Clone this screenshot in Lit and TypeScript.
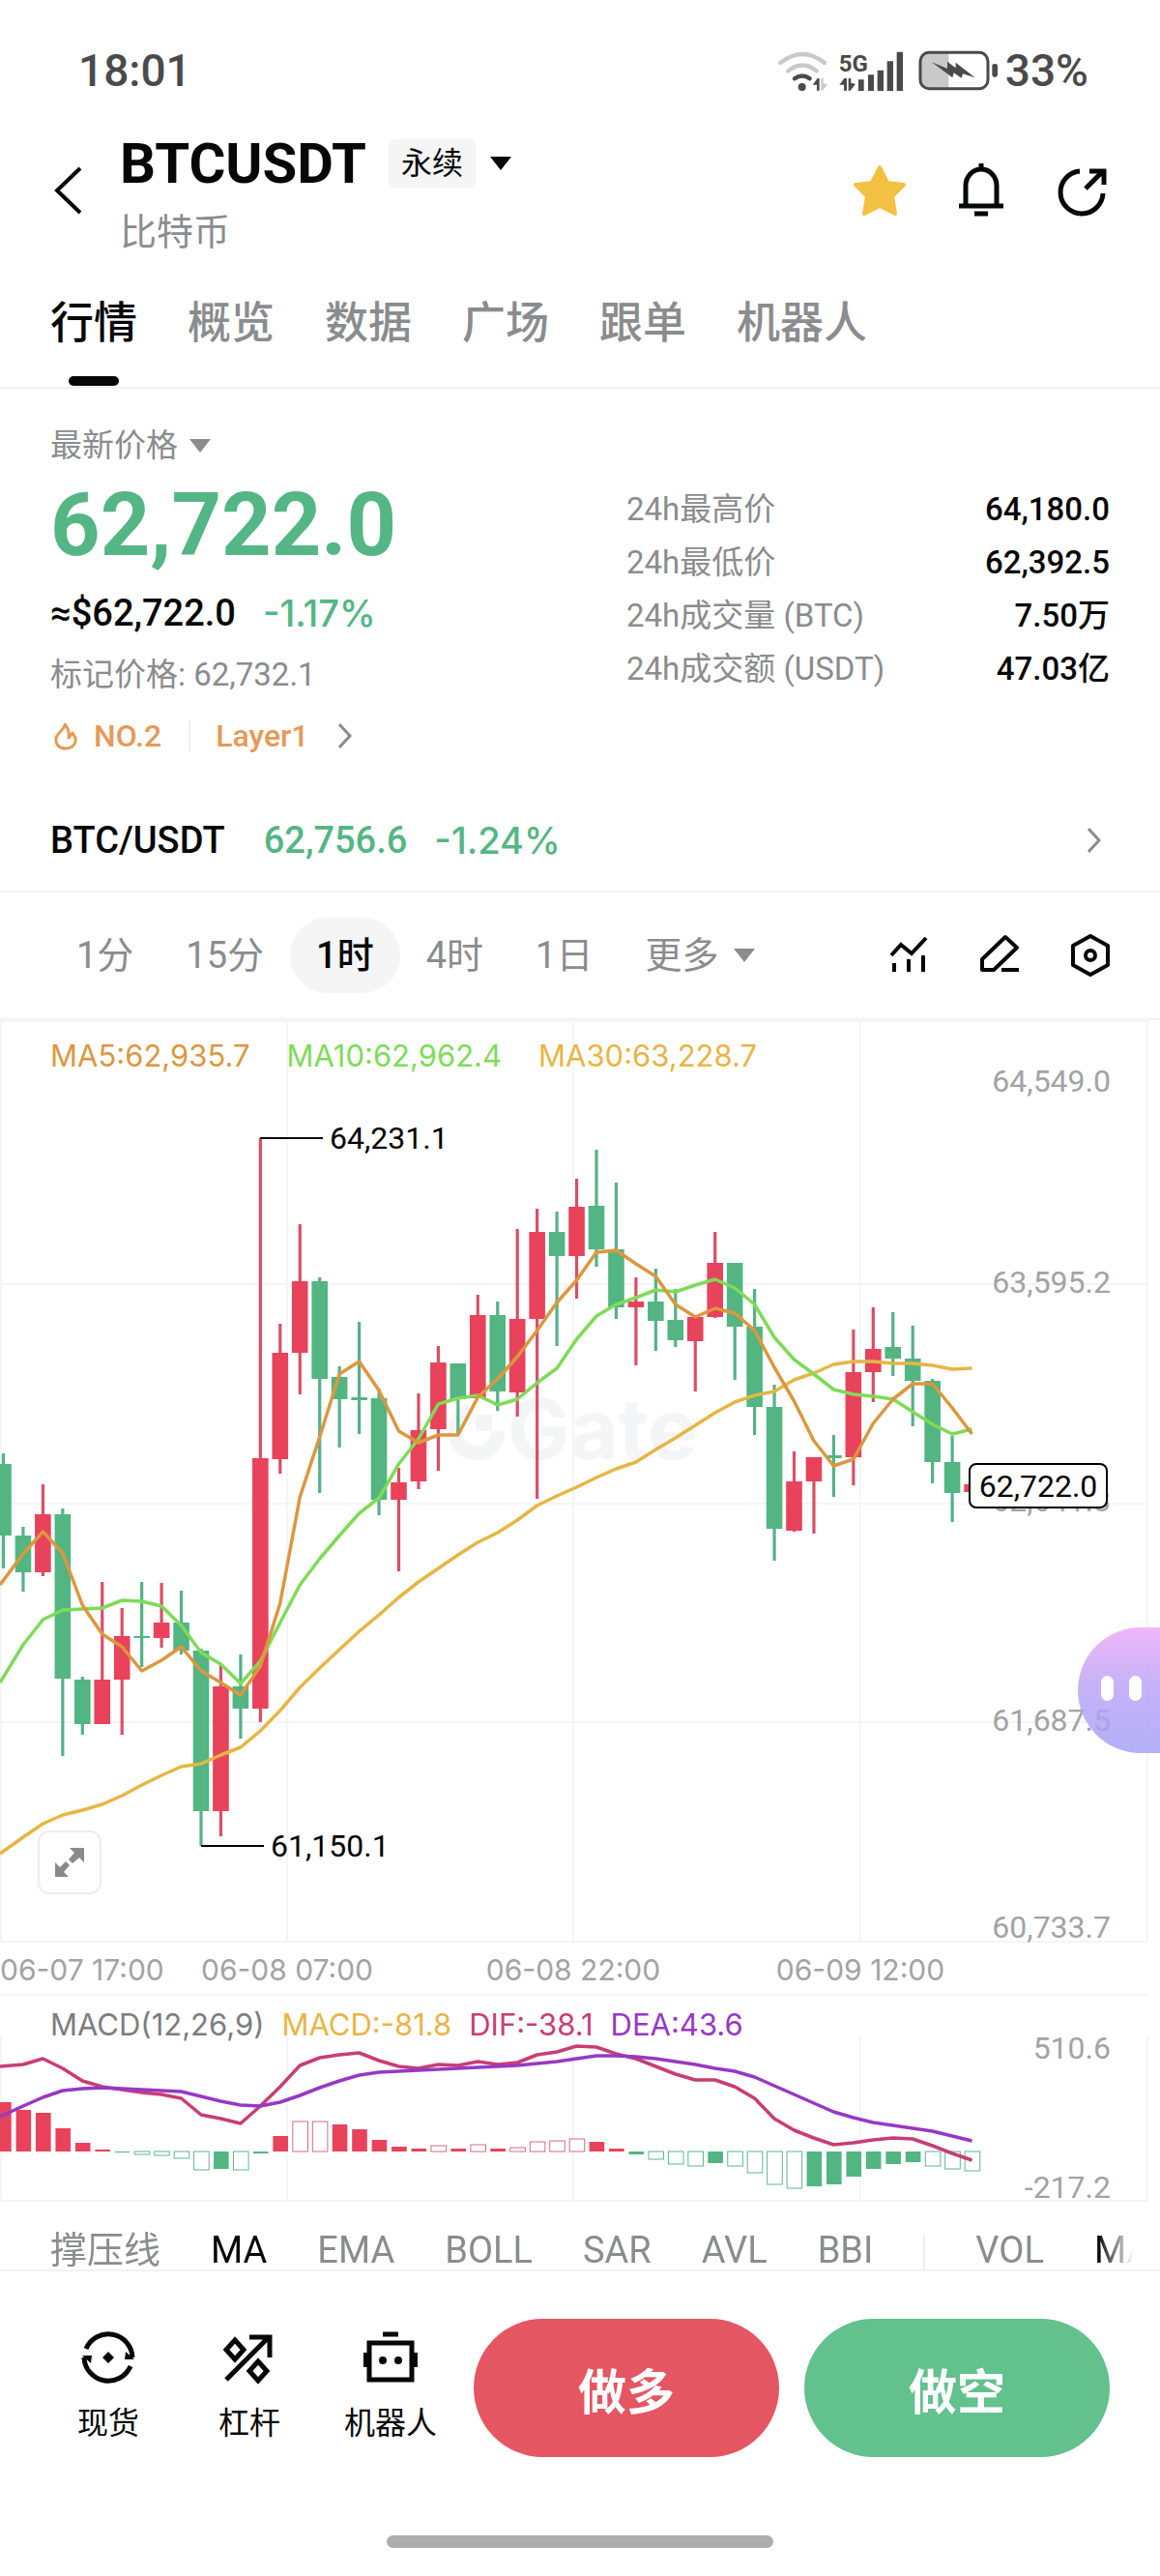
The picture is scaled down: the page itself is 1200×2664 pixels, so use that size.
import { LitElement, html, svg, css } from "lit";
import { customElement, property, state } from "lit/decorators.js";
import { classMap } from "lit/directives/class-map.js";

type Side = "up" | "down";
/** side, body top, body bottom, wick top, wick bottom (chart units) */
type Candle = [Side, number, number, number, number];
/** side, height of the histogram bar, filled or outlined */
type Bar = [Side, number, boolean];

const STEP = 20.45;
const FIRST = 3.5;
const xAt = (i: number) => FIRST + STEP * i;

const CANDLES: Candle[] = [
  ["down", 1514, 1588, 1503, 1622], ["down", 1588, 1626, 1579, 1646], ["up", 1566, 1626, 1535, 1630],
  ["down", 1566, 1736, 1560, 1816], ["down", 1737, 1783, 1734, 1794], ["up", 1737, 1783, 1636, 1783],
  ["up", 1692, 1737, 1663, 1794], ["down", 1692, 1694, 1636, 1724], ["up", 1678, 1694, 1637, 1704],
  ["down", 1678, 1707, 1645, 1711], ["down", 1707, 1873, 1705, 1909], ["up", 1744, 1873, 1722, 1899],
  ["down", 1744, 1767, 1711, 1798], ["up", 1508, 1767, 1177, 1781], ["up", 1399, 1509, 1369, 1524],
  ["up", 1325, 1399, 1266, 1442], ["down", 1325, 1426, 1321, 1544], ["down", 1424, 1447, 1413, 1497],
  ["down", 1445, 1448, 1367, 1483], ["down", 1446, 1551, 1436, 1567], ["up", 1533, 1551, 1518, 1625],
  ["up", 1479, 1532, 1441, 1540], ["up", 1409, 1478, 1392, 1521], ["down", 1410, 1447, 1410, 1483],
  ["up", 1360, 1446, 1339, 1446], ["down", 1360, 1439, 1346, 1459], ["up", 1364, 1440, 1271, 1465],
  ["up", 1274, 1364, 1250, 1550], ["down", 1274, 1299, 1253, 1392], ["up", 1248, 1299, 1219, 1343],
  ["down", 1247, 1292, 1189, 1310], ["down", 1292, 1352, 1223, 1364], ["up", 1346, 1352, 1321, 1412],
  ["down", 1346, 1366, 1312, 1397], ["down", 1365, 1386, 1333, 1393], ["up", 1362, 1387, 1362, 1439],
  ["up", 1306, 1362, 1274, 1363], ["down", 1306, 1372, 1306, 1427], ["down", 1372, 1455, 1333, 1484],
  ["down", 1455, 1581, 1432, 1614], ["up", 1532, 1583, 1501, 1584], ["up", 1507, 1532, 1507, 1586],
  ["down", 1505, 1508, 1484, 1548], ["up", 1419, 1507, 1375, 1536], ["up", 1395, 1419, 1352, 1450],
  ["down", 1393, 1405, 1357, 1423], ["down", 1405, 1428, 1371, 1475], ["down", 1428, 1512, 1426, 1534],
  ["down", 1512, 1544, 1485, 1574], ["up", 1535, 1543, 1535, 1543],
];

const MA5 = [1639, 1607, 1584, 1606, 1660, 1690, 1703, 1728, 1717, 1703, 1728, 1740, 1753, 1723, 1658, 1548, 1486,
  1421, 1408, 1438, 1480, 1492, 1484, 1484, 1445, 1426, 1403, 1376, 1347, 1324, 1295, 1293, 1307, 1320, 1349, 1362,
  1353, 1358, 1376, 1414, 1449, 1490, 1516, 1509, 1472, 1447, 1431, 1431, 1456, 1483];
const MA10 = [1740, 1701, 1675, 1665, 1664, 1663, 1655, 1656, 1661, 1681, 1709, 1721, 1741, 1718, 1678, 1639, 1612,
  1588, 1565, 1549, 1514, 1488, 1452, 1446, 1443, 1453, 1447, 1430, 1415, 1385, 1361, 1349, 1342, 1334, 1336, 1329,
  1323, 1332, 1349, 1383, 1406, 1421, 1437, 1442, 1444, 1447, 1460, 1473, 1483, 1478];
const MA30 = [1917, 1900, 1886, 1877, 1872, 1866, 1857, 1846, 1836, 1827, 1824, 1815, 1807, 1790, 1769, 1745, 1725,
  1706, 1687, 1670, 1652, 1636, 1622, 1608, 1595, 1585, 1572, 1557, 1547, 1538, 1528, 1519, 1512, 1499, 1487, 1474,
  1461, 1450, 1443, 1439, 1427, 1420, 1411, 1408, 1408, 1410, 1410, 1412, 1416, 1415];
const DIF = [2137, 2135, 2129, 2139, 2152, 2158, 2161, 2164, 2166, 2170, 2187, 2191, 2196, 2178, 2158, 2136, 2128,
  2125, 2123, 2131, 2137, 2139, 2135, 2136, 2132, 2135, 2133, 2125, 2122, 2116, 2117, 2124, 2129, 2137, 2145, 2151,
  2151, 2158, 2170, 2191, 2203, 2211, 2218, 2216, 2213, 2211, 2212, 2219, 2227, 2234];
const DEA = [2189, 2178, 2169, 2162, 2160, 2159, 2160, 2161, 2162, 2163, 2168, 2173, 2177, 2178, 2174, 2167, 2159,
  2152, 2146, 2143, 2142, 2141, 2140, 2139, 2138, 2137, 2136, 2134, 2132, 2129, 2126, 2126, 2127, 2129, 2132, 2135,
  2139, 2142, 2148, 2157, 2166, 2175, 2184, 2190, 2195, 2198, 2201, 2204, 2209, 2214];

const HISTOGRAM: Bar[] = [
  ["up", 51, true], ["up", 43, true], ["up", 40, true], ["up", 24, true], ["up", 9, true], ["up", 2, true],
  ["down", 1, true], ["down", 3, false], ["down", 4, false], ["down", 7, false], ["down", 19, false],
  ["down", 18, true], ["down", 19, false], ["down", 2, true], ["up", 16, true], ["up", 31, false],
  ["up", 31, false], ["up", 28, true], ["up", 23, true], ["up", 12, true], ["up", 5, true], ["up", 3, true],
  ["up", 6, false], ["up", 3, true], ["up", 7, false], ["up", 3, true], ["up", 4, false], ["up", 10, false],
  ["up", 11, false], ["up", 13, false], ["up", 10, true], ["up", 3, true], ["down", 3, true],
  ["down", 8, false], ["down", 13, false], ["down", 15, false], ["down", 12, true], ["down", 15, false],
  ["down", 22, false], ["down", 34, false], ["down", 38, false], ["down", 36, true], ["down", 34, true],
  ["down", 26, true], ["down", 18, true], ["down", 13, true], ["down", 11, true], ["down", 15, false],
  ["down", 18, false], ["down", 20, false],
];

const line = (ys: number[]) =>
  ys.map((y, i) => `${i === 0 ? 0 : xAt(i).toFixed(1)},${y}`).join(" ");

@customElement("price-chart")
export class PriceChart extends LitElement {
  static styles = css`
    :host { display: block; position: relative; }
    .plot { display: block; width: 100%; height: auto; }
    .grid { stroke: #f4f5f6; stroke-width: 2; fill: none; }
    .mark { fill: #f4f5f7; }
    .ring { stroke: #f4f5f7; stroke-width: 15; fill: none; }
    .brand { font: 700 86px Inter, sans-serif; fill: #f4f5f7; }
    .up { fill: #e9425b; }
    .down { fill: #52b582; }
    .wick-up { fill: #d94f66; }
    .wick-down { fill: #55b188; }
    .axis { font: 400 32px Roboto, sans-serif; fill: #a1a3a5; }
    .date { font: 400 30px Inter, sans-serif; fill: #a1a3a5; }
    .end { text-anchor: end; }
    .mid { text-anchor: middle; }
    .curve { fill: none; stroke-width: 3.5; stroke-linejoin: round; }
    .ma5 { stroke: #dc973f; }
    .ma10 { stroke: #7edb58; }
    .ma30 { stroke: #e6b644; }
    .lead { stroke: #000; stroke-width: 2; }
    .note { font: 400 32px Roboto, sans-serif; fill: #000; }
    .tag { fill: #fff; stroke: #000; stroke-width: 2; }
    .legend {
      position: absolute; top: 18px; left: 52px; display: flex; gap: 38px;
      font: 400 31px/38px Inter, sans-serif;
    }
    .t5 { color: #dc973f; }
    .t10 { color: #7edb58; }
    .t30 { color: #e6b644; }
    .expand {
      position: absolute; left: 39px; bottom: 103px; width: 66px; height: 66px; padding: 0;
      display: grid; place-items: center; background: #fff; border: 2px solid #ededee; border-radius: 12px;
    }
    .helper {
      position: absolute; right: 0; top: 628px; width: 85px; height: 130px; border: 0;
      border-radius: 65px 0 0 65px; display: flex; align-items: center; gap: 16px; padding: 0 0 4px 24px;
      background: linear-gradient(rgba(238, 177, 248, 0.92), rgba(190, 168, 247, 0.88) 45%, rgba(160, 157, 246, 0.8));
    }
    .eye { width: 13px; height: 26px; border-radius: 7px; background: #fff; }
  `;

  render() {
    const labels: [string, number][] = [
      ["64,549.0", 1129], ["63,595.2", 1337], ["62,641.3", 1563], ["61,687.5", 1790], ["60,733.7", 2004],
    ];
    const dates: [string, number][] = [["06-08 07:00", 297], ["06-08 22:00", 593], ["06-09 12:00", 890]];
    return html`
      <svg class="plot" viewBox="0 1055 1200 1007" role="img" aria-label="BTCUSDT 1时 K线">
        <path class="grid" d="M0 1056H1187M0 1328H1187M0 1555H1187M0 1781H1187M0 2008H1187
          M1 1055V2008M297 1055V2008M593 1055V2008M890 1055V2008M1187 1055V2008" />
        <path class="ring" d="M490 1459A22 22 0 1 0 515 1480" />
        <rect class="mark" x="492" y="1463" width="17" height="17" />
        <text class="brand" x="525" y="1509">Gate</text>
        ${CANDLES.map(([side, top, bottom, high, low], i) => svg`
          <rect class="wick-${side}" x=${xAt(i) - 1.6} y=${high} width="3.2" height=${low - high} />
          <rect class=${side} x=${xAt(i) - 8.3} y=${top} width="16.6" height=${bottom - top} />`)}
        <polyline class="curve ma30" points=${line(MA30)} />
        <polyline class="curve ma10" points=${line(MA10)} />
        <polyline class="curve ma5" points=${line(MA5)} />
        <path class="lead" d="M269 1177H334M208 1909H273" />
        <text class="note" x="341" y="1188">64,231.1</text>
        <text class="note" x="280" y="1920">61,150.1</text>
        ${labels.map(([t, y]) => svg`<text class="axis end" x="1149" y=${y}>${t}</text>`)}
        <rect class="tag" x="1003" y="1514" width="142" height="45" rx="7" />
        <text class="note mid" x="1074" y="1548">62,722.0</text>
        <text class="date" x="0" y="2048">06-07 17:00</text>
        ${dates.map(([t, x]) => svg`<text class="date mid" x=${x} y="2048">${t}</text>`)}
      </svg>
      <div class="legend">
        <span class="t5">MA5:62,935.7</span><span class="t10">MA10:62,962.4</span><span class="t30">MA30:63,228.7</span>
      </div>
      <button class="expand" aria-label="全屏">
        <svg width="32" height="32" viewBox="0 0 32 32" fill="#8a8a8a">
          <path d="M16 1h15v15l-5-5-7 6-4-4 6-7zM1 31V16l5 5 6-6 4 4-6 7 5 5z" />
        </svg>
      </button>
      <button class="helper" aria-label="助手"><span class="eye"></span><span class="eye"></span></button>
    `;
  }
}

@customElement("macd-chart")
export class MacdChart extends LitElement {
  static styles = css`
    :host { display: block; position: relative; }
    .plot { display: block; width: 100%; height: auto; }
    .grid { stroke: #f4f5f6; stroke-width: 2; fill: none; }
    .axis { font: 400 32px Roboto, sans-serif; fill: #a1a3a5; text-anchor: end; }
    .curve { fill: none; stroke-width: 3.5; stroke-linejoin: round; }
    .dif { stroke: #c83d76; }
    .dea { stroke: #9738c4; }
    .up { fill: #e9425b; }
    .down { fill: #52b582; }
    .box-up { fill: #fff; stroke: #d76b7e; }
    .box-down { fill: #fff; stroke: #5cb88c; }
    .legend {
      position: absolute; top: 13px; left: 52px; display: flex; gap: 18px;
      font: 400 31px/38px Inter, sans-serif; color: #7b7d7f;
    }
    .t-macd { color: #e9b545; }
    .t-dif { color: #c83d76; }
    .t-dea { color: #9738c4; }
  `;

  render() {
    const zero = 2225;
    return html`
      <svg class="plot" viewBox="0 2062 1200 215" role="img" aria-label="MACD">
        <path class="grid" d="M0 2063H1187M0 2276H1187M1 2105V2276M297 2105V2276M593 2105V2276M890 2105V2276M1187 2105V2276" />
        ${HISTOGRAM.map(([side, h, filled], i) => {
          const y = side === "up" ? zero - h : zero;
          return filled
            ? svg`<rect class=${side} x=${xAt(i) - 7.4} y=${y} width="15.6" height=${h} />`
            : svg`<rect class="box-${side}" x=${xAt(i) - 7.4} y=${y} width="15.6" height=${h} />`;
        })}
        <polyline class="curve dif" points=${line(DIF)} />
        <polyline class="curve dea" points=${line(DEA)} />
        <text class="axis" x="1149" y="2129">510.6</text>
        <text class="axis" x="1149" y="2273">-217.2</text>
      </svg>
      <div class="legend">
        <span>MACD(12,26,9)</span><span class="t-macd">MACD:-81.8</span><span class="t-dif">DIF:-38.1</span>
        <span class="t-dea">DEA:43.6</span>
      </div>
    `;
  }
}

@customElement("status-bar")
export class StatusBar extends LitElement {
  static styles = css`
    :host {
      box-sizing: border-box; display: flex; align-items: center; justify-content: space-between; height: 134px;
      padding: 12px 74px 0 81px; font: 500 46px/54px Roboto, sans-serif; color: #4a4a4a;
    }
    .right { display: flex; align-items: center; gap: 6px; }
    .net { font: 700 72px Roboto, sans-serif; }
  `;

  render() {
    return html`
      <span>18:01</span>
      <span class="right">
        <svg width="230" height="48" viewBox="50 26 690 144" fill="#4a4a4a" role="img" aria-label="5G">
          <g fill="none" stroke-width="13" stroke-linecap="round">
            <path stroke="#c9c9c9" d="M60 74Q128 20 197 74M84 99Q128 64 172 99" />
            <path stroke="#4a4a4a" d="M104 123Q128 106 151 123" />
          </g>
          <circle cx="127" cy="149" r="12" />
          <path d="M160 142L175 122H181V160H173V142z" />
          <path fill="#c9c9c9" d="M186 122H193V138L207 140L190 160H186z" />
          <text class="net" x="241" y="101">5G</text>
          <path d="M243 142L258 122H266V160H257V142zM271 122H279V136L293 140L277 160H271z" />
          <path d="M302 126h17v35h-17zM332 111h18v50h-18zM361 97h19v64h-19zM391 69h19v92h-19zM421 40h19v121h-19z" />
          <path fill="#c9c9c9" d="M520 42H582V154H520Q494 154 494 128V68Q494 42 520 42z" />
          <rect x="494" y="42" width="210" height="112" rx="27" fill="none" stroke="#4a4a4a" stroke-width="9" />
          <rect x="717" y="77" width="17" height="41" rx="7" />
          <path d="M530 72L578 92V70L604 90V73L664 120L626 108L622 121L598 105L594 120L570 102z" />
        </svg>
        <span>33%</span>
      </span>
    `;
  }
}

@customElement("app-root")
export class AppRoot extends LitElement {
  @state() private tab = "行情";
  @state() private interval = "1时";
  @property({ type: String }) symbol = "BTCUSDT";

  static styles = css`
    :host {
      display: block; background: #fff; color: #060707; overflow: hidden;
      font-family: Roboto, "Noto Sans CJK SC", sans-serif;
    }
    * { box-sizing: border-box; }
    button { border: 0; background: none; padding: 0; margin: 0; font: inherit; color: inherit; }
    a { color: inherit; text-decoration: none; }
    svg { display: block; flex: none; }
    h1, p, dl, dd, dt { margin: 0; font-weight: inherit; }
    .grey { color: #8a8c8e; }
    .green { color: #54b684; }
    .rate { font-family: Inter, sans-serif; }

    .head { display: flex; align-items: center; height: 126px; padding: 0 52px; }
    .back { margin-right: 38px; }
    .names { flex: 1; display: flex; flex-direction: column; gap: 16px; }
    .pair { display: flex; align-items: center; gap: 23px; height: 70px; }
    .pair h1 { font: 700 58px/70px Roboto, sans-serif; }
    .kind { display: flex; align-items: center; gap: 15px; font-size: 32px; line-height: 51px; }
    .chip { background: #f5f5f5; border-radius: 6px; padding: 0 13px; }
    .coin { font-size: 38px; line-height: 40px; }
    .tools { display: flex; gap: 49px; }

    .tabs { display: flex; gap: 52px; padding: 0 52px; border-bottom: 2px solid #f2f2f3; }
    .tab { position: relative; padding: 45px 0 35px; font-size: 45px; line-height: 60px; font-weight: 500; color: #8a8c8e; }
    .tab.on { color: #060707; }
    .tab.on::after {
      content: ""; position: absolute; left: 50%; bottom: 1px; width: 52px; height: 10px; margin-left: -26px;
      border-radius: 5px; background: #060707;
    }

    .quote { display: grid; grid-template-columns: 596fr 500fr; padding: 39px 52px 0; font-size: 33px; line-height: 40px; }
    .latest { display: flex; align-items: center; gap: 12px; }
    .price { font-size: 90px; line-height: 100px; font-weight: 700; margin: 13px 0 18px; }
    .fiat { display: flex; gap: 28px; font-size: 38px; line-height: 44px; font-weight: 500; margin-bottom: 22px; }
    .rank { display: flex; align-items: center; margin-top: 23px; color: #e59a58; font-weight: 500; font-size: 32px; }
    .rank .no { padding: 0 28px 0 13px; }
    .rank .layer { border-left: 2px solid #f0f0f1; padding: 0 30px 0 26px; line-height: 32px; }
    .stats { padding-top: 58px; line-height: 55px; }
    .stats div { display: flex; justify-content: space-between; }
    .stats dd { font-weight: 500; }
    .stats dt { color: #8a8c8e; }

    .spot {
      display: flex; align-items: center; gap: 40px; height: 142px; padding: 36px 61px 0 52px;
      border-bottom: 2px solid #f2f2f3; font-size: 38px; line-height: 44px; font-weight: 500;
    }
    .spot .nums { flex: 1; display: flex; gap: 28px; }

    .periods { display: flex; align-items: center; height: 132px; padding: 0 52px; border-bottom: 2px solid #f2f2f3; }
    .period { height: 78px; padding: 0 27px; border-radius: 39px; font-size: 38px; line-height: 78px; color: #8a8c8e; }
    .period.on { background: #f5f5f5; color: #060707; font-weight: 500; }
    .more { display: flex; align-items: center; gap: 16px; }
    .draw { margin-left: auto; display: flex; gap: 54px; }

    .marks {
      display: flex; align-items: flex-end; gap: 52px; padding: 30px 0 12px 52px; margin: 0 28px -12px 0; overflow: hidden;
      font-size: 38px; line-height: 40px; color: #8a8c8e;
      -webkit-mask-image: linear-gradient(to left, transparent, #000 36px);
      mask-image: linear-gradient(to left, transparent, #000 36px);
    }
    .marks button { flex: none; }
    .marks .on { color: #060707; }
    .bar { width: 2px; height: 36px; flex: none; background: #eeeeef; }

    .trade { display: flex; padding: 49px 52px 81px 39px; border-top: 2px solid #f2f2f3; }
    .nav { flex: 438; display: grid; grid-template-columns: repeat(3, 1fr); margin-right: 13px; }
    .nav a { display: flex; flex-direction: column; align-items: center; gap: 20px; padding-top: 12px; font-size: 32px; line-height: 40px; white-space: nowrap; }
    .act { flex: 658; display: grid; grid-template-columns: 1fr 1fr; gap: 26px; }
    .act button { height: 143px; border-radius: 72px; font-size: 50px; font-weight: 700; color: #fff; }
    .long { background: #e45661; }
    .short { background: #62c18d; }
    .home { width: 400px; height: 13px; margin: 0 auto 30px; border-radius: 7px; background: #adadad; }
  `;

  private caret(color: string) {
    return html`<svg width="22" height="14" viewBox="0 0 22 14"><path d="M0 0H22L11 14z" fill=${color} /></svg>`;
  }

  private chevron() {
    return html`<svg width="14" height="26" viewBox="0 0 14 26" fill="none" stroke="#8a8c8e" stroke-width="3"><path d="M1 1L12 13L1 25" /></svg>`;
  }

  render() {
    const tabs = ["行情", "概览", "数据", "广场", "跟单", "机器人"];
    const periods = ["1分", "15分", "1时", "4时", "1日"];
    const stats = [
      ["24h最高价", "64,180.0"], ["24h最低价", "62,392.5"], ["24h成交量 (BTC)", "7.50万"], ["24h成交额 (USDT)", "47.03亿"],
    ];
    return html`
      <status-bar></status-bar>
      <header class="head">
        <button class="back" aria-label="返回">
          <svg width="34" height="52" viewBox="0 0 34 52" fill="none" stroke="#060707" stroke-width="4"><path d="M31 3L7 26L31 49" /></svg>
        </button>
        <div class="names">
          <div class="pair">
            <h1>${this.symbol}</h1>
            <button class="kind"><span class="chip">永续</span>${this.caret("#060707")}</button>
          </div>
          <p class="coin grey">比特币</p>
        </div>
        <div class="tools">
          <button aria-label="收藏">
            <svg width="56" height="56" viewBox="0 0 56 56"><path fill="#f3c142" stroke="#f3c142" stroke-width="4" stroke-linejoin="round"
              d="M28 4L36 20L53 22L41 34L44 52L28 44L12 52L15 34L3 22L20 20z" /></svg>
          </button>
          <button aria-label="提醒">
            <svg width="56" height="56" viewBox="0 0 56 56" fill="none" stroke="#060707" stroke-width="5">
              <path d="M28 0V6M12 44V23A16 17 0 0 1 44 23V44M5 44H51M21 52H35" /></svg>
          </button>
          <button aria-label="分享">
            <svg width="56" height="56" viewBox="0 0 56 56" fill="none" stroke="#060707" stroke-width="5">
              <path d="M25 8A22 22 0 1 0 49 31M31 26L48 9M35 8H50V22" /></svg>
          </button>
        </div>
      </header>

      <nav class="tabs">
        ${tabs.map((t) => html`<button class=${classMap({ tab: true, on: t === this.tab })} @click=${() => (this.tab = t)}>${t}</button>`)}
      </nav>

      <section class="quote">
        <div>
          <button class="latest grey">最新价格 ${this.caret("#8a8c8e")}</button>
          <p class="price green">62,722.0</p>
          <p class="fiat"><span>≈$62,722.0</span><span class="green rate">-1.17%</span></p>
          <p class="grey">标记价格: 62,732.1</p>
          <a class="rank" href="#rank">
            <svg width="32" height="32" viewBox="0 0 32 32" fill="none" stroke="#e59a58" stroke-width="3" stroke-linejoin="round">
              <path d="M15 4C16 8 8 12 6 18C5 25 9 29 16 29C23 29 27 24 26 18L23 13L19 18C20 11 18 7 15 4z" /></svg>
            <span class="no">NO.2</span><span class="layer">Layer1</span>${this.chevron()}
          </a>
        </div>
        <dl class="stats">
          ${stats.map(([k, v]) => html`<div><dt>${k}</dt><dd>${v}</dd></div>`)}
        </dl>
      </section>

      <a class="spot" href="#spot">
        <span>BTC/USDT</span>
        <span class="nums green"><span>62,756.6</span><span class="rate">-1.24%</span></span>
        ${this.chevron()}
      </a>

      <div class="periods">
        ${periods.map((p) => html`<button class=${classMap({ period: true, on: p === this.interval })} @click=${() => (this.interval = p)}>${p}</button>`)}
        <button class="period more">更多 ${this.caret("#8a8c8e")}</button>
        <div class="draw">
          <button aria-label="指标">
            <svg width="40" height="44" viewBox="0 0 40 44" fill="none" stroke="#060707" stroke-width="4">
              <path d="M2 22L12 11L23 20L38 4M5 30V39M20 26V39M35 22V39" /></svg>
          </button>
          <button aria-label="画线">
            <svg width="40" height="44" viewBox="0 0 40 44" fill="none" stroke="#060707" stroke-width="4" stroke-linejoin="round">
              <path d="M2 26L26 3L38 14L14 37H2zM22 37H40" /></svg>
          </button>
          <button aria-label="设置">
            <svg width="40" height="44" viewBox="0 0 40 44" fill="none" stroke="#060707" stroke-width="4" stroke-linejoin="round">
              <path d="M20 2L38 12V32L20 42L2 32V12z" /><circle cx="20" cy="22" r="5" /></svg>
          </button>
        </div>
      </div>

      <price-chart></price-chart>
      <macd-chart></macd-chart>

      <div class="marks">
        <button>撑压线</button><button class="on">MA</button><button>EMA</button><button>BOLL</button><button>SAR</button>
        <button>AVL</button><button>BBI</button><span class="bar"></span><button>VOL</button><button class="on">MACD</button>
      </div>

      <footer class="trade">
        <nav class="nav">
          <a href="#spot-trade">
            <svg width="56" height="56" viewBox="0 0 56 56" fill="none" stroke="#060707" stroke-width="5">
              <path d="M5 19A25 25 0 0 1 53 28M51 37A25 25 0 0 1 3 28" />
              <path fill="#060707" stroke="none" d="M28 22L34 28L28 34L22 28zM55 30L45 30L46 22zM1 26L11 26L10 34z" />
            </svg>现货</a>
          <a href="#margin">
            <svg width="56" height="56" viewBox="0 0 56 56" fill="none" stroke="#060707" stroke-width="5">
              <path d="M4 51L47 8M28 7H49V28M13 10L22 20L13 30L4 20zM37 32L46 42L37 52L28 42z" />
            </svg>杠杆</a>
          <a href="#bot">
            <svg width="56" height="56" viewBox="0 0 56 56" fill="none" stroke="#060707" stroke-width="5">
              <path d="M6 13H50V51H6zM20 4H36M2 23V38M54 23V38" />
              <circle cx="20" cy="31" r="4" fill="#060707" stroke="none" /><circle cx="36" cy="31" r="4" fill="#060707" stroke="none" />
            </svg>机器人</a>
        </nav>
        <div class="act">
          <button class="long">做多</button><button class="short">做空</button>
        </div>
      </footer>
      <div class="home"></div>
    `;
  }
}
